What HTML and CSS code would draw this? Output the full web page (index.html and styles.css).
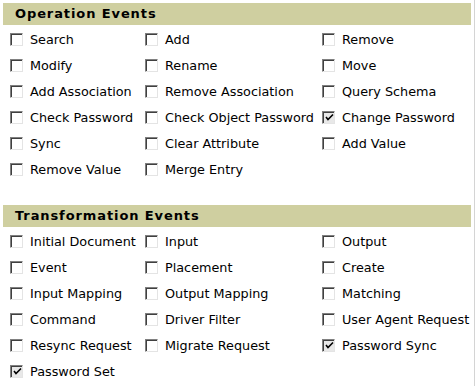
FILE: index.html
```html
<!DOCTYPE html>
<html lang="en">
<head>
    <meta charset="UTF-8">
    <title>Events</title>
    <link rel="stylesheet" href="styles.css">
</head>
<body>
    <div class="panel">
        <div class="section">
            <div class="header">Operation Events</div>
            <div class="grid">
                <label class="item"><span class="box"></span>Search</label>
                <label class="item"><span class="box"></span>Add</label>
                <label class="item"><span class="box"></span>Remove</label>
                <label class="item"><span class="box"></span>Modify</label>
                <label class="item"><span class="box"></span>Rename</label>
                <label class="item"><span class="box"></span>Move</label>
                <label class="item"><span class="box"></span>Add Association</label>
                <label class="item"><span class="box"></span>Remove Association</label>
                <label class="item"><span class="box"></span>Query Schema</label>
                <label class="item"><span class="box"></span>Check Password</label>
                <label class="item"><span class="box"></span>Check Object Password</label>
                <label class="item"><span class="box checked"><svg viewBox="0 0 9 9" width="9" height="9"><path d="M1 4 L3 6.5 L8 1.5" fill="none" stroke="#000" stroke-width="1.6"/></svg></span>Change Password</label>
                <label class="item"><span class="box"></span>Sync</label>
                <label class="item"><span class="box"></span>Clear Attribute</label>
                <label class="item"><span class="box"></span>Add Value</label>
                <label class="item"><span class="box"></span>Remove Value</label>
                <label class="item"><span class="box"></span>Merge Entry</label>
            </div>
        </div>
        <div class="section">
            <div class="header">Transformation Events</div>
            <div class="grid">
                <label class="item"><span class="box"></span>Initial Document</label>
                <label class="item"><span class="box"></span>Input</label>
                <label class="item"><span class="box"></span>Output</label>
                <label class="item"><span class="box"></span>Event</label>
                <label class="item"><span class="box"></span>Placement</label>
                <label class="item"><span class="box"></span>Create</label>
                <label class="item"><span class="box"></span>Input Mapping</label>
                <label class="item"><span class="box"></span>Output Mapping</label>
                <label class="item"><span class="box"></span>Matching</label>
                <label class="item"><span class="box"></span>Command</label>
                <label class="item"><span class="box"></span>Driver Filter</label>
                <label class="item"><span class="box"></span>User Agent Request</label>
                <label class="item"><span class="box"></span>Resync Request</label>
                <label class="item"><span class="box"></span>Migrate Request</label>
                <label class="item"><span class="box checked"><svg viewBox="0 0 9 9" width="9" height="9"><path d="M1 4 L3 6.5 L8 1.5" fill="none" stroke="#000" stroke-width="1.6"/></svg></span>Password Sync</label>
                <label class="item"><span class="box checked"><svg viewBox="0 0 9 9" width="9" height="9"><path d="M1 4 L3 6.5 L8 1.5" fill="none" stroke="#000" stroke-width="1.6"/></svg></span>Password Set</label>
            </div>
        </div>
    </div>
</body>
</html>
```
FILE: styles.css
```css
html, body {
    margin: 0;
    padding: 0;
    background: #fff;
    font-family: 'DejaVu Sans', Verdana, sans-serif;
    font-size: 12.8px;
    color: #000;
}
.panel {
    width: 475px;
    height: 386px;
    box-sizing: border-box;
    border-right: 1px solid #d4d4d4;
    padding: 3px 3px 0 3px;
}
.section {
    margin-bottom: 24px;
}
.header {
    height: 22px;
    line-height: 22px;
    background: #cfcfa0;
    padding-left: 12px;
    font-size: 13px;
    font-weight: bold;
    letter-spacing: 0.9px;
}
.grid {
    display: grid;
    grid-template-columns: 135px 177px 1fr;
    grid-auto-rows: 26px;
}
.item {
    display: flex;
    align-items: center;
    padding: 2px 0 0 7px;
    white-space: nowrap;
}
.box {
    width: 13px;
    height: 13px;
    box-sizing: border-box;
    margin-right: 7px;
    border-top: 1px solid #808080;
    border-left: 1px solid #808080;
    border-right: 1px solid #e4e4e4;
    border-bottom: 1px solid #e4e4e4;
    box-shadow: inset 1px 1px 0 #404040;
    background: #fff;
    display: flex;
    align-items: center;
    justify-content: center;
    flex-shrink: 0;
}
.box.checked {
    background: #e8e8e8;
    padding: 1px 0 0 1px;
}
```
